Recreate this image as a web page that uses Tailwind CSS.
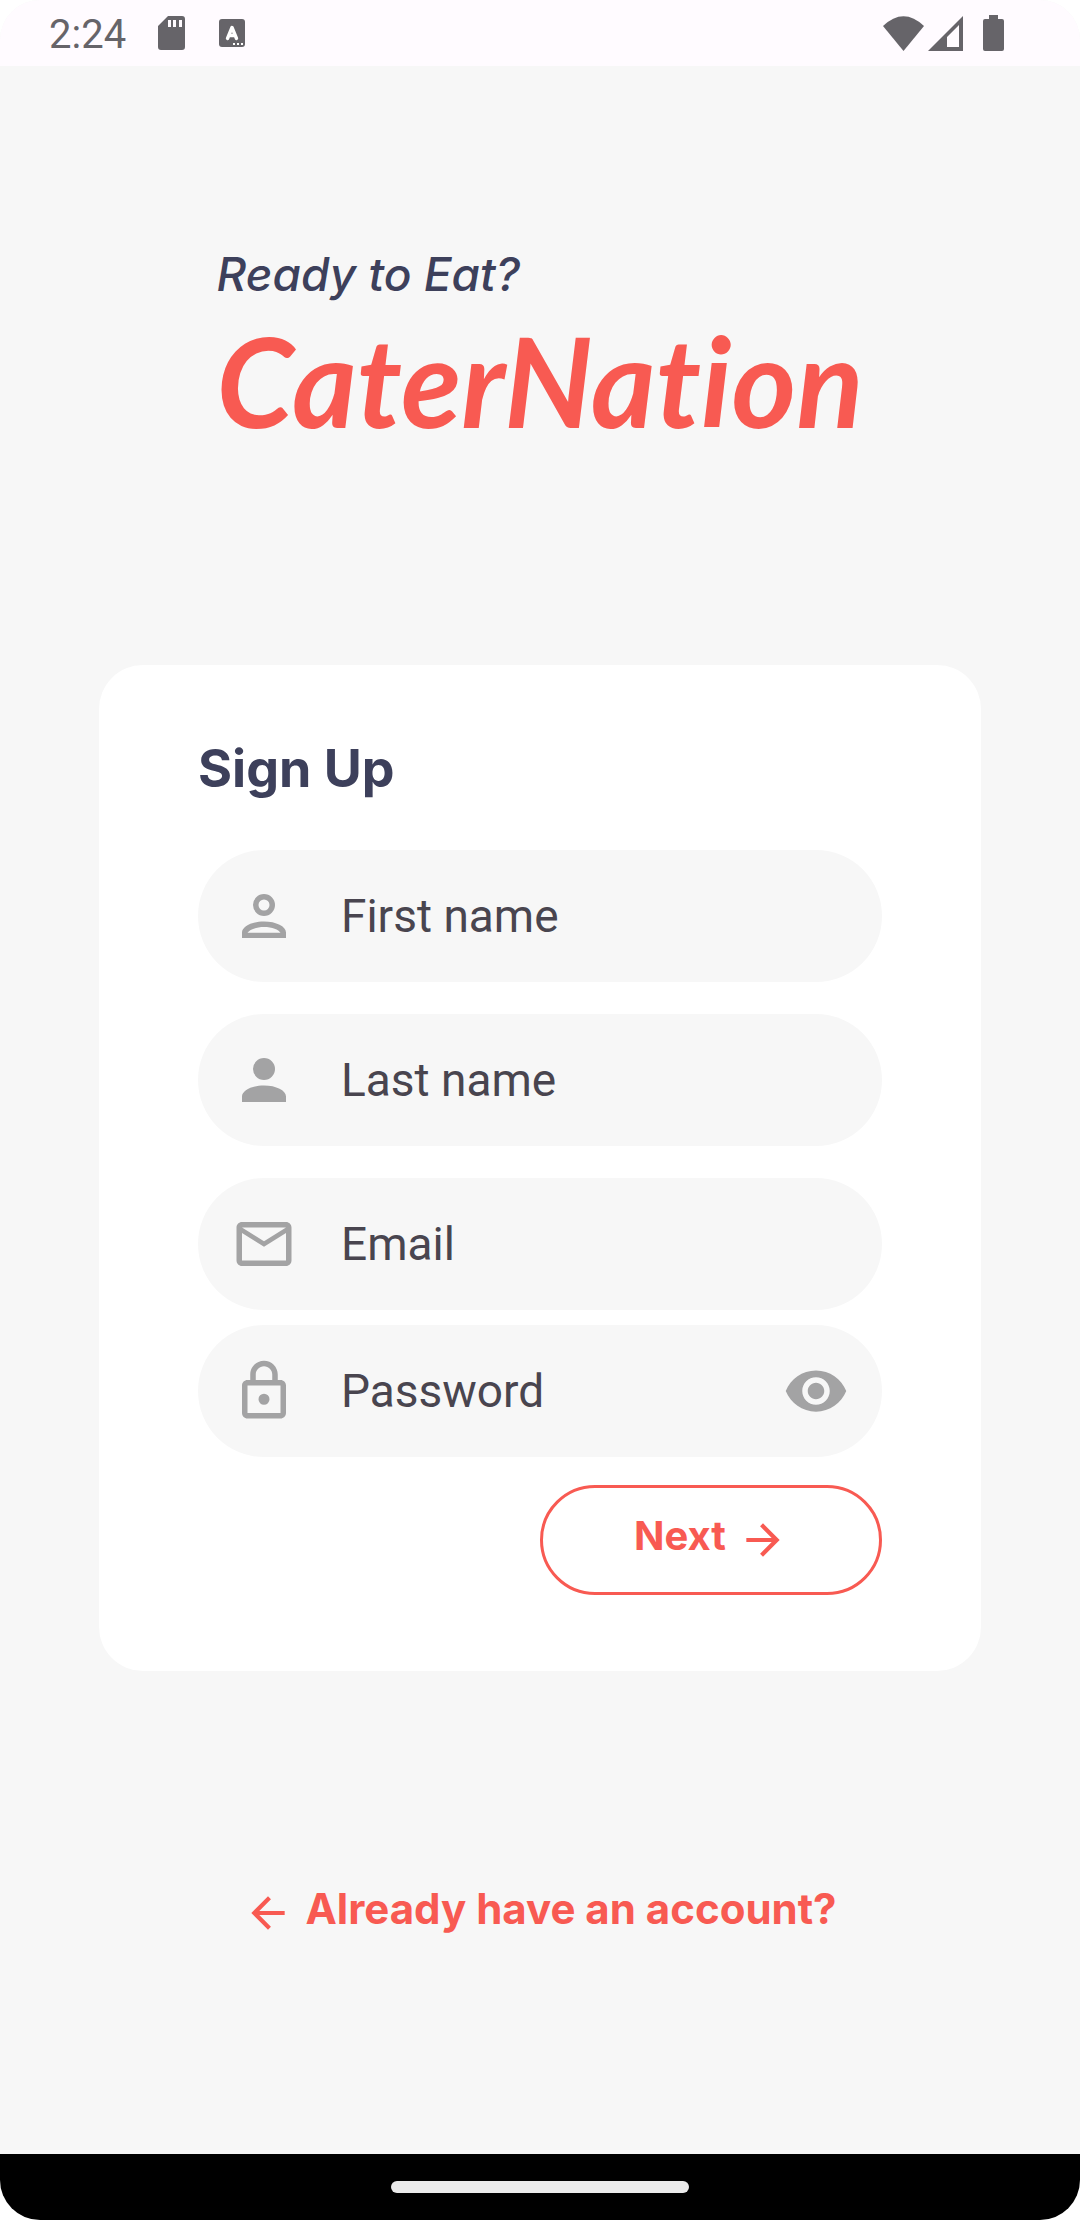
<!DOCTYPE html>
<html lang="en">
<head>
<meta charset="utf-8">
<meta name="viewport" content="width=device-width, initial-scale=1">
<title>CaterNation – Sign Up</title>
<script src="https://cdn.jsdelivr.net/npm/@tailwindcss/browser@4"></script>
</head>
<body class="bg-white">
<div class="flex min-h-screen flex-col overflow-hidden rounded-[40px] bg-[#f7f7f7] font-['Inter',sans-serif]">

  <!-- Status bar -->
  <header class="flex h-[66px] shrink-0 items-center justify-between bg-[#fffbff] pr-[76px] pl-[49px] font-['Roboto',sans-serif] text-[#666469]">
    <div class="flex items-center">
      <time class="pt-1 text-[40px] leading-[48px]">2:24</time>
      <svg class="ml-8 h-[34px] w-[27px]" viewBox="0 0 27 34" fill="currentColor" aria-hidden="true"><path fill-rule="evenodd" d="M10 0H24Q27 0 27 3V31Q27 34 24 34H3Q0 34 0 31V10ZM10 4V11H13V4ZM15 4V11H18V4ZM21 4V11H24V4Z"/></svg>
      <svg class="ml-[34px] h-7 w-[26px]" viewBox="0 0 26 28" aria-hidden="true"><rect width="26" height="28" rx="3" fill="currentColor"/><path d="M8.500 19.500L13 8.500L17.500 19.500M10 16.500H16" fill="none" stroke="#fff" stroke-width="3.400" stroke-linecap="round" stroke-linejoin="round"/><path d="M14 24h2v2h-2zM18 24h2v2h-2zM22 24h2v2h-2z" fill="#fff"/></svg>
    </div>
    <div class="flex items-center">
      <svg class="h-[35px] w-[41px]" viewBox="0 0 41 35" fill="currentColor" aria-hidden="true"><path d="M0 10Q20.500 -9.500 41 10L20.500 35Z"/></svg>
      <svg class="ml-1 h-[35px] w-[35px]" viewBox="0 0 35 35" fill="currentColor" aria-hidden="true"><path fill-rule="evenodd" d="M35 0V35H0ZM31 9L19 21V31H31Z"/></svg>
      <svg class="ml-5 h-9 w-[21px]" viewBox="0 0 21 36" fill="currentColor" aria-hidden="true"><path d="M6 0H15V4H19Q21 4 21 6V34Q21 36 19 36H2Q0 36 0 34V6Q0 4 2 4H6Z"/></svg>
    </div>
  </header>

  <main class="flex flex-1 flex-col px-[99px]">
    <div class="mx-auto pt-[180px] pb-[207px]">
      <p class="text-[46px] leading-[56px] font-medium text-[#3d405b] italic">Ready to Eat?</p>
      <h1 class="font-['Lato',sans-serif] text-[124px] leading-[156px] font-bold text-[#f85a52] italic [font-variant-ligatures:none]">CaterNation</h1>
    </div>

    <form class="flex flex-col rounded-[44px] bg-white px-[99px] pt-[72px] pb-[76px]">
      <h2 class="text-[52px] leading-[64px] font-bold text-[#3d405b]">Sign Up</h2>

      <div class="mt-[49px] flex flex-col gap-8">
        <label class="flex h-[132px] items-center gap-11 rounded-full bg-[#f7f7f7] px-[33px]">
          <svg class="size-[66px] shrink-0 text-[#a3a3a4]" viewBox="0 0 24 24" fill="currentColor" aria-hidden="true"><path fill-rule="evenodd" d="M12 4a4 4 0 1 1 0 8a4 4 0 0 1 0-8zm0 2a2 2 0 1 0 0 4a2 2 0 0 0 0-4zM12 14c4.420 0 8 1.790 8 4v2H4v-2c0-2.210 3.580-4 8-4zm0 2c-3 0-5.300 1-6 2.100h12c-.7-1.100-3-2.100-6-2.100z"/></svg>
          <input type="text" aria-label="First name" placeholder="First name" class="min-w-0 flex-1 bg-transparent font-['Roboto',sans-serif] text-[46px] leading-[56px] text-[#49454f] outline-none placeholder:text-[#49454f]">
        </label>
        <label class="flex h-[132px] items-center gap-11 rounded-full bg-[#f7f7f7] px-[33px]">
          <svg class="size-[66px] shrink-0 text-[#a3a3a4]" viewBox="0 0 24 24" fill="currentColor" aria-hidden="true"><path d="M12 4a4 4 0 1 1 0 8a4 4 0 0 1 0-8zM12 14c4.420 0 8 1.790 8 4v2H4v-2c0-2.210 3.580-4 8-4z"/></svg>
          <input type="text" aria-label="Last name" placeholder="Last name" class="min-w-0 flex-1 bg-transparent font-['Roboto',sans-serif] text-[46px] leading-[56px] text-[#49454f] outline-none placeholder:text-[#49454f]">
        </label>
        <label class="flex h-[132px] items-center gap-11 rounded-full bg-[#f7f7f7] px-[33px]">
          <svg class="size-[66px] shrink-0 text-[#a3a3a4]" viewBox="0 0 24 24" fill="currentColor" aria-hidden="true"><path d="M22 6C22 4.900 21.100 4 20 4H4C2.900 4 2 4.900 2 6V18C2 19.100 2.900 20 4 20H20C21.100 20 22 19.100 22 18V6M20 6L12 11L4 6H20M20 18H4V8L12 13L20 8V18Z"/></svg>
          <input type="email" aria-label="Email" placeholder="Email" class="min-w-0 flex-1 bg-transparent font-['Roboto',sans-serif] text-[46px] leading-[56px] text-[#49454f] outline-none placeholder:text-[#49454f]">
        </label>
      </div>

      <div class="mt-[15px] flex h-[132px] items-center rounded-full bg-[#f7f7f7] px-[33px]">
        <label class="flex min-w-0 flex-1 items-center gap-11">
          <svg class="size-[66px] shrink-0 text-[#a3a3a4]" viewBox="0 0 24 24" fill="currentColor" aria-hidden="true"><path fill-rule="evenodd" d="M18 8h-1V6c0-2.760-2.240-5-5-5S7 3.240 7 6v2H6c-1.100 0-2 .9-2 2v10c0 1.100.9 2 2 2h12c1.100 0 2-.9 2-2V10c0-1.100-.9-2-2-2zM9 6c0-1.660 1.340-3 3-3s3 1.340 3 3v2H9V6zm9 14H6V10h12v10zm-6-3a2 2 0 1 0 0-4a2 2 0 0 0 0 4z"/></svg>
          <input type="password" aria-label="Password" placeholder="Password" class="min-w-0 flex-1 bg-transparent font-['Roboto',sans-serif] text-[46px] leading-[56px] text-[#49454f] outline-none placeholder:text-[#49454f]">
        </label>
        <button type="button" aria-label="Show password" class="shrink-0 text-[#a3a3a4]">
          <svg class="size-[66px]" viewBox="0 0 24 24" fill="currentColor" aria-hidden="true"><path d="M12 4.500C7 4.500 2.730 7.610 1 12c1.730 4.390 6 7.500 11 7.500s9.270-3.110 11-7.500c-1.730-4.390-6-7.500-11-7.500zM12 17c-2.760 0-5-2.240-5-5s2.240-5 5-5 5 2.240 5 5-2.240 5-5 5zm0-8c-1.660 0-3 1.340-3 3s1.340 3 3 3 3-1.340 3-3-1.340-3-3-3z"/></svg>
        </button>
      </div>

      <button type="submit" class="mt-7 flex h-[110px] w-1/2 items-center justify-center gap-3 self-end rounded-full border-3 border-[#f85a52] text-[40px] leading-[48px] font-bold text-[#f85a52]">
        <span class="pb-2">Next</span>
        <svg class="size-[50px]" viewBox="0 0 24 24" fill="currentColor" aria-hidden="true"><path d="M12 4l-1.410 1.410L16.170 11H4v2h12.170l-5.580 5.590L12 20l8-8z"/></svg>
      </button>
    </form>

    <a href="#" class="mx-auto my-auto flex items-center gap-3 text-[42px] leading-[48px] font-bold text-[#f85a52]">
      <svg class="size-[50px]" viewBox="0 0 24 24" fill="currentColor" aria-hidden="true"><path d="M20 11H7.830l5.590-5.590L12 4l-8 8 8 8 1.410-1.410L7.830 13H20v-2z"/></svg>
      <span class="pb-2">Already have an account?</span>
    </a>
  </main>

  <!-- Gesture navigation bar -->
  <footer class="flex h-[66px] shrink-0 items-center justify-center bg-black">
    <div class="h-3 w-[298px] rounded-full bg-[#ebebeb]"></div>
  </footer>
</div>
</body>
</html>
